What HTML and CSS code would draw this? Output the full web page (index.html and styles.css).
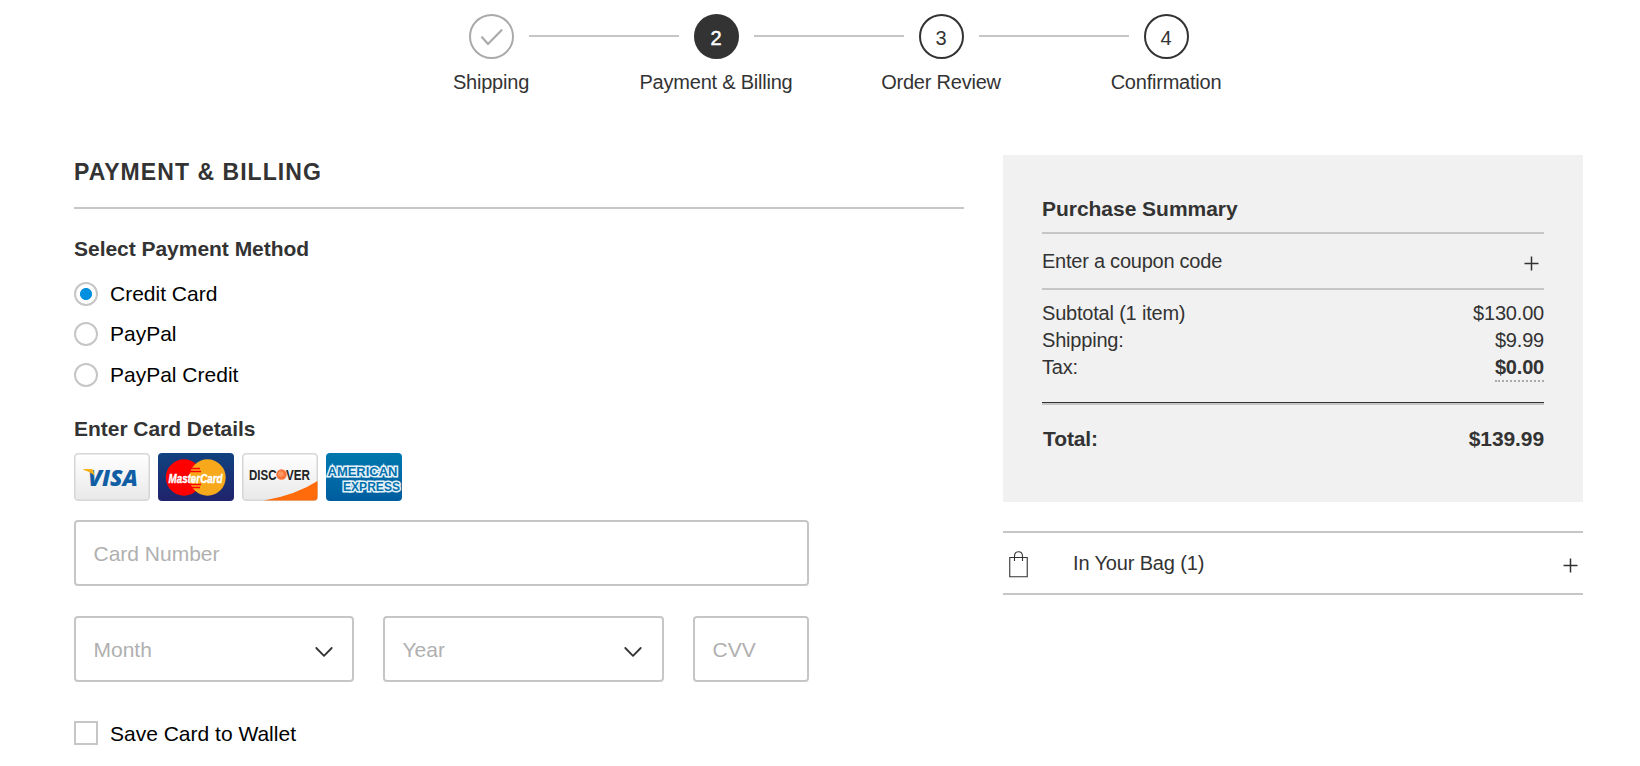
FILE: index.html
```html
<!DOCTYPE html>
<html lang="en">
<head>
<meta charset="utf-8">
<title>Payment &amp; Billing</title>
<link rel="stylesheet" href="styles.css">
</head>
<body>
<ol class="steps">
  <li class="step done"><span class="circle"><svg width="24" height="18" viewBox="0 0 24 18"><path d="M2 9.300 8 16 21.500 2.200" fill="none" stroke="#aaa" stroke-width="2.200" stroke-linecap="round"/></svg></span><span class="label">Shipping</span></li>
  <li class="step current"><span class="circle">2</span><span class="label">Payment &amp; Billing</span></li>
  <li class="step"><span class="circle">3</span><span class="label">Order Review</span></li>
  <li class="step"><span class="circle">4</span><span class="label">Confirmation</span></li>
</ol>
<div class="page">
  <main class="payment">
    <h1>PAYMENT &amp; BILLING</h1>
    <h2>Select Payment Method</h2>
    <div class="methods">
      <label class="option"><span class="radio on"></span>Credit Card</label>
      <label class="option"><span class="radio"></span>PayPal</label>
      <label class="option"><span class="radio"></span>PayPal Credit</label>
    </div>
    <h2>Enter Card Details</h2>
    <div class="cards">
      <svg class="card" viewBox="0 0 76 48">
        <defs><linearGradient id="pale" x1="0" y1="0" x2="0" y2="1"><stop offset="0" stop-color="#fff"/><stop offset="1" stop-color="#e9e9e9"/></linearGradient></defs>
        <rect x=".75" y=".75" width="74.500" height="46.500" rx="3.500" fill="url(#pale)" stroke="#d6d6d6" stroke-width="1.500"/>
        <text class="visa" x="14" y="33" textLength="50" lengthAdjust="spacingAndGlyphs">VISA</text>
        <path d="M9.500 16h7.500q2 0 2.500 2l.8 4.500q-4-4-10.800-5.500z" fill="#f9b11a"/>
      </svg>
      <svg class="card" viewBox="0 0 76 48">
        <defs><linearGradient id="navy" x1="0" y1="0" x2="0" y2="1"><stop offset="0" stop-color="#10427f"/><stop offset="1" stop-color="#20236b"/></linearGradient></defs>
        <rect width="76" height="48" rx="4" fill="url(#navy)"/>
        <circle cx="26" cy="24.500" r="18.200" fill="#fe0000"/>
        <circle cx="49.500" cy="24.500" r="18.200" fill="#f8a91b"/>
        <path d="M33 15.500h9M32 18.500h11M31 31.500h12M32 34.500h10" stroke="#fe0000" stroke-width="1.500"/>
        <text class="mc" x="10.500" y="30" textLength="54" lengthAdjust="spacingAndGlyphs">MasterCard</text>
      </svg>
      <svg class="card" viewBox="0 0 76 48">
        <rect x=".75" y=".75" width="74.500" height="46.500" rx="3.500" fill="url(#pale)" stroke="#d6d6d6" stroke-width="1.500"/>
        <path d="M75.500 28v16q0 3.500-3.500 3.500H22Q54 42 75.500 28z" fill="#ff6a0a"/>
        <text class="disc" x="7" y="26.500" textLength="27.500" lengthAdjust="spacingAndGlyphs">DISC</text>
        <circle cx="39.500" cy="21.500" r="5.200" fill="#f9733a"/>
        <circle cx="38.800" cy="21" r="2.800" fill="#fb9a60"/>
        <text class="disc" x="44" y="26.500" textLength="24" lengthAdjust="spacingAndGlyphs">VER</text>
      </svg>
      <svg class="card" viewBox="0 0 76 48">
        <defs><linearGradient id="blue" x1="0" y1="0" x2="0" y2="1"><stop offset="0" stop-color="#0078ae"/><stop offset="1" stop-color="#005d9f"/></linearGradient></defs>
        <rect width="76" height="48" rx="4" fill="url(#blue)"/>
        <text class="amex" x="1.500" y="22.500" textLength="70" lengthAdjust="spacingAndGlyphs">AMERICAN</text>
        <text class="amex" x="17" y="38" textLength="57" lengthAdjust="spacingAndGlyphs">EXPRESS</text>
      </svg>
    </div>
    <div class="field"><span>Card Number</span></div>
    <div class="row">
      <div class="field"><span>Month</span><svg class="chevron" width="18" height="12" viewBox="0 0 18 12"><path d="M1.300 2 9 9.800 16.700 2"/></svg></div>
      <div class="field year"><span>Year</span><svg class="chevron" width="18" height="12" viewBox="0 0 18 12"><path d="M1.300 2 9 9.800 16.700 2"/></svg></div>
      <div class="field"><span>CVV</span></div>
    </div>
    <label class="option save"><span class="check"></span><span class="save-text">Save Card to Wallet</span></label>
  </main>
  <aside class="side">
    <section class="summary">
      <h2>Purchase Summary</h2>
      <div class="coupon"><span>Enter a coupon code</span><svg class="plus" width="15" height="15" viewBox="0 0 15 15"><path d="M.5 7.500h14M7.500.5v14"/></svg></div>
      <dl class="prices">
        <div><dt>Subtotal (1 item)</dt><dd>$130.00</dd></div>
        <div><dt>Shipping:</dt><dd>$9.99</dd></div>
        <div><dt>Tax:</dt><dd class="tax">$0.00</dd></div>
      </dl>
      <div class="total"><span>Total:</span><span>$139.99</span></div>
    </section>
    <section class="bag">
      <svg class="bag-icon" width="19" height="27" viewBox="0 0 19 27"><path d="M.75 6.500h17.500v19.200H.75zM5.500 10V5.500Q5.500.8 9.500.8t4 4.700V10"/></svg>
      <span class="bag-label">In Your Bag (1)</span>
      <svg class="plus" width="15" height="15" viewBox="0 0 15 15"><path d="M.5 7.500h14M7.500.5v14"/></svg>
    </section>
  </aside>
</div>
</body>
</html>
```
FILE: styles.css
```css
* { box-sizing: border-box; }
body {
  margin: 0;
  background: #fff;
  color: #333;
  font: 21px/28px "Liberation Sans", Arial, sans-serif;
}
h1, h2, ol, dl, dd { margin: 0; padding: 0; }
svg { display: block; flex: none; }

.steps {
  display: flex;
  list-style: none;
  width: 900px;
  margin: 0 0 0 379px;
  padding-top: 14px;
  font-size: 20px;
  letter-spacing: -.22px;
}
.step {
  display: flex;
  flex-direction: column;
  align-items: center;
  width: 225px;
  position: relative;
}
.step + .step::before {
  content: "";
  position: absolute;
  left: -75px;
  top: 21px;
  width: 150px;
  height: 2px;
  background: #c6c6c6;
}
.circle {
  display: flex;
  align-items: center;
  justify-content: center;
  width: 45px;
  height: 45px;
  padding: 2px 1px 0 0;
  border: 2px solid #333;
  border-radius: 50%;
  letter-spacing: 0;
}
.done .circle { border-color: #aaa; padding: 0; }
.current .circle { background: #333; color: #fff; -webkit-text-stroke: .5px #fff; }
.label { margin: 9px 1px 0 0; white-space: nowrap; }

.page {
  display: flex;
  align-items: flex-start;
  gap: 39px;
  padding: 59px 57px 0 74px;
}
.payment { width: 890px; }
h1 {
  font-size: 23px;
  line-height: 30px;
  letter-spacing: 1.050px;
  padding: 2px 0 20px;
  border-bottom: 2px solid #c6c6c6;
}
h2 { font-size: 21px; line-height: 28px; letter-spacing: -.03px; }
.payment h1 + h2 { margin-top: 26px; }
.methods {
  display: flex;
  flex-direction: column;
  gap: 12px;
  margin: 17px 0 26px;
}
.option:last-child { margin-top: 1px; }
.option {
  display: flex;
  align-items: center;
  gap: 12px;
  color: #000;
  line-height: 28px;
}
.radio, .check {
  width: 24px;
  height: 24px;
  border: 2px solid #c6c6c6;
}
.radio { border-radius: 50%; }
.radio.on { background: radial-gradient(circle, #0090df 5.600px, #fff 6.400px); }
.option.save { margin-top: 0; }
.save-text { padding-top: 2px; }

.cards { display: flex; gap: 8px; margin: 10px 0 19px; }
.card { width: 76px; height: 48px; }
.card text { font-family: "Liberation Sans", Arial, sans-serif; font-weight: 700; }
.card .visa { font-family: "Open Sans", sans-serif; font-size: 23.500px; font-weight: 800; font-style: italic; fill: #115ea5; }
.card .mc { font-size: 12.500px; font-style: italic; fill: #fff; stroke: #fff; stroke-width: .4px; }
.card .disc { font-size: 14.500px; fill: #222; }
.card .amex { font-size: 12.500px; fill: #0070ac; stroke: #e4f1f8; stroke-width: 3px; paint-order: stroke; }

.field {
  display: flex;
  align-items: center;
  justify-content: space-between;
  height: 66px;
  padding: 0 19px 0 17.500px;
  border: 2px solid #c6c6c6;
  border-radius: 4px;
  color: #b0b0b0;
}
.field span { padding-top: 2px; }
.payment > .field { width: 735px; }
.row {
  display: grid;
  grid-template-columns: 280px 281px 116px;
  gap: 29px;
  width: 735px;
  margin: 30px 0 36px;
}
.row .year { padding-right: 20.500px; }
.chevron { margin-top: 5px; fill: none; stroke: #333; stroke-width: 1.800; stroke-linecap: round; stroke-linejoin: round; }

.side { width: 580px; }
.summary {
  height: 347px;
  padding: 40px 39px 0;
  background: #f1f1f1;
}
.coupon {
  display: flex;
  align-items: center;
  justify-content: space-between;
  height: 58px;
  margin-top: 9px;
  padding: 0 5px 1px 0;
  border-top: 2px solid #c6c6c6;
  border-bottom: 2px solid #c6c6c6;
  font-size: 20px;
  letter-spacing: -.24px;
}
.plus { fill: none; stroke: #333; stroke-width: 1.500; }
.coupon .plus { margin-top: 5px; }
.prices { padding-top: 10px; line-height: 27px; font-size: 20px; letter-spacing: -.2px; }
.prices div { display: flex; justify-content: space-between; align-items: flex-start; }
.tax { font-weight: 700; height: 28px; border-bottom: 2px dotted #aaa; }
.total {
  display: flex;
  justify-content: space-between;
  margin-top: 20px;
  padding: 22px 0 0 1px;
  border-top: 1px solid #333;
  box-shadow: inset 0 2px #c6c6c6;
  font-weight: 700;
  letter-spacing: -.1px;
}
.bag {
  display: flex;
  align-items: center;
  height: 64px;
  margin-top: 29px;
  padding: 0 5px 0 6px;
  border-top: 2px solid #c6c6c6;
  border-bottom: 2px solid #c6c6c6;
  font-size: 20px;
  letter-spacing: -.15px;
}
.bag-icon { margin-top: 2px; fill: none; stroke: #333; stroke-width: 1.100; }
.bag .plus { margin-top: 4px; }
.bag-label { flex: 1; margin-left: 45px; }
```
